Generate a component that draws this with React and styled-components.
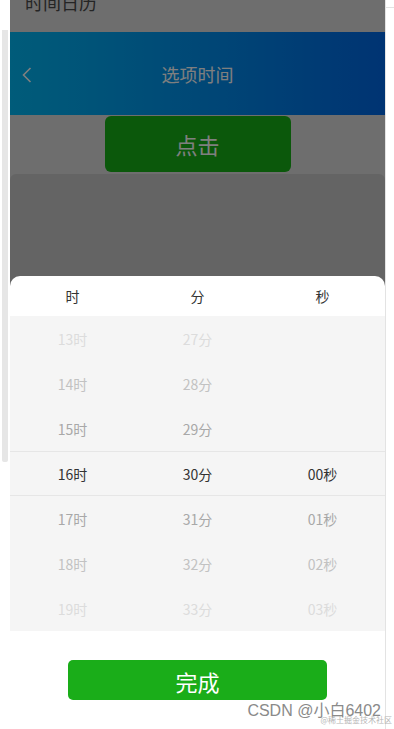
import React from 'react';
import styled, { createGlobalStyle } from 'styled-components';

const Global = createGlobalStyle`
  html, body {
    margin: 0;
    padding: 0;
    background: #fff;
    font-family: "Noto Sans CJK SC", "Noto Sans", sans-serif;
  }
  * { box-sizing: border-box; }
`;

const Screen = styled.div`
  position: relative;
  width: 394px;
  height: 729px;
  overflow: hidden;
  display: flex;
  background: #fff;
`;

const Gutter = styled.div`
  width: 10px;
  padding-top: 30px;
`;

const Thumb = styled.div`
  width: 6px;
  height: 432px;
  margin-left: 2px;
  background: #e6e6e6;
  border-radius: 0 0 2px 2px;
`;

const Phone = styled.div`
  position: relative;
  width: 376px;
  height: 100%;
  overflow: hidden;
  border-right: 1px solid #e3e3e3;
  background: #dcdcdc;
`;

const RightGutter = styled.div`
  flex: 1;
  margin-top: 7px;
  border-top: 1px solid #e3e3e3;
`;

const Title = styled.div`
  height: 39px;
  margin-top: -7px;
  padding: 0 15px;
  font-size: 18px;
  line-height: 18px;
  color: #4a4a4a;
`;

const Header = styled.div`
  height: 83px;
  display: flex;
  align-items: center;
  justify-content: center;
  position: relative;
  background: linear-gradient(to right, #00b8f4, #0068e6);
  color: #fff;
  font-size: 18px;
`;

const Back = styled.svg`
  position: absolute;
  left: 12px;
  top: 35px;
`;

const ClickButton = styled.button`
  display: block;
  width: 186px;
  height: 56px;
  margin: 1px auto 0;
  border: none;
  border-radius: 6px;
  background: #16b016;
  color: #fff;
  font-family: inherit;
  font-size: 22px;
`;

const Card = styled.div`
  height: 600px;
  margin-top: 2px;
  border-radius: 6px 6px 0 0;
  background: #c9c9c9;
`;

const Mask = styled.div`
  position: absolute;
  inset: 0;
  background: rgba(0, 0, 0, 0.5);
`;

const Sheet = styled.div`
  position: absolute;
  left: 0;
  right: 0;
  bottom: 0;
  background: #fff;
  border-radius: 10px 10px 0 0;
  overflow: hidden;
`;

const Grid = styled.div`
  display: grid;
  grid-template-columns: repeat(3, 1fr);
  align-items: center;
  justify-items: center;
`;

const Labels = styled(Grid)`
  height: 40px;
  font-size: 14px;
  color: #333;
`;

const Wheel = styled.div`
  background: #f5f5f5;
`;

const Row = styled(Grid)`
  height: 45px;
  font-size: 14px;
  border-top: 1px solid ${p => (p.$active ? '#e6e6e6' : 'transparent')};
  border-bottom: 1px solid ${p => (p.$active ? '#e6e6e6' : 'transparent')};
`;

const Cell = styled.span`
  color: ${p => p.$tone};
`;

const Footer = styled.div`
  height: 98px;
  padding-top: 29px;
`;

const Done = styled.button`
  display: block;
  width: 259px;
  height: 40px;
  margin: 0 auto;
  border: none;
  border-radius: 5px;
  background: #1aad19;
  color: #fff;
  font-family: inherit;
  font-size: 22px;
  line-height: 40px;
`;

const Watermark = styled.div`
  position: absolute;
  right: 13px;
  bottom: 8px;
  font-family: "Liberation Sans", "Noto Sans CJK SC", sans-serif;
  font-size: 16px;
  color: #8a8a8a;
  text-shadow: 0 0 2px #fff;
`;

const SubMark = styled.div`
  position: absolute;
  right: 2px;
  bottom: 4px;
  font-size: 8px;
  color: #b5b5b5;
`;

const tones = ['#333', '#a8a8a8', '#c2c2c2', '#dcdcdc'];
const hours = [13, 14, 15, 16, 17, 18, 19];
const minutes = [27, 28, 29, 30, 31, 32, 33];
const seconds = [null, null, null, '00', '01', '02', '03'];

export default function App() {
  return (
    <>
      <Global />
      <Screen>
        <Gutter>
          <Thumb />
        </Gutter>
        <Phone>
          <Title>时间日历</Title>
          <Header>
            <Back width="10" height="16" viewBox="0 0 10 16">
              <path d="M8.5 1 L1.5 8 L8.5 15" fill="none" stroke="#fff" strokeWidth="1.6" />
            </Back>
            选项时间
          </Header>
          <ClickButton>点击</ClickButton>
          <Card />
          <Mask />
          <Sheet>
            <Labels>
              <span>时</span>
              <span>分</span>
              <span>秒</span>
            </Labels>
            <Wheel>
              {hours.map((h, i) => {
                const tone = tones[Math.abs(i - 3)];
                return (
                  <Row key={h} $active={i === 3}>
                    <Cell $tone={tone}>{h}时</Cell>
                    <Cell $tone={tone}>{minutes[i]}分</Cell>
                    <Cell $tone={tone}>{seconds[i] ? `${seconds[i]}秒` : ''}</Cell>
                  </Row>
                );
              })}
            </Wheel>
            <Footer>
              <Done>完成</Done>
            </Footer>
          </Sheet>
        </Phone>
        <RightGutter />
        <Watermark>CSDN @小白6402</Watermark>
        <SubMark>@稀土掘金技术社区</SubMark>
      </Screen>
    </>
  );
}
